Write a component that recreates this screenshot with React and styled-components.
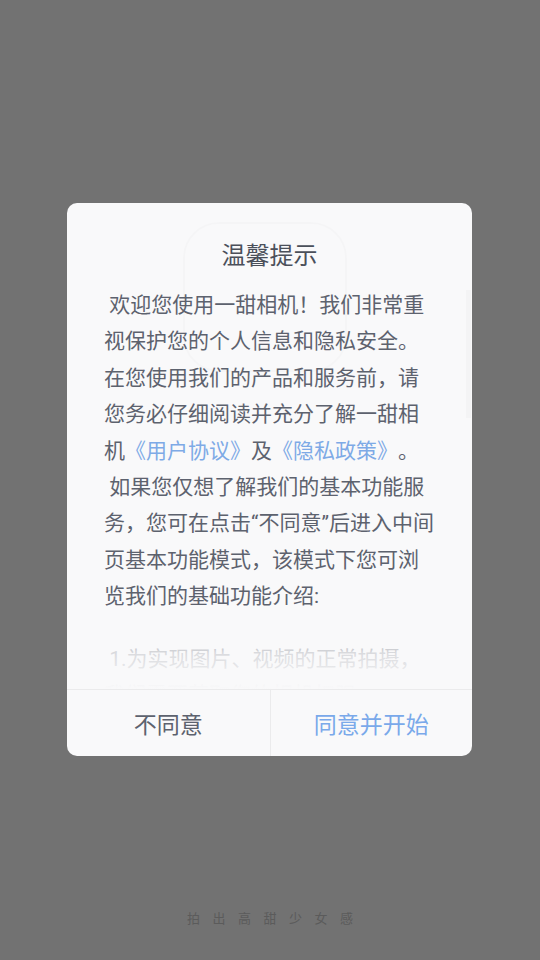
import styled, { createGlobalStyle } from "styled-components"

const GlobalStyle = createGlobalStyle`
    html, body {
        margin: 0;
        padding: 0;
        background: #727272;
    }
    * {
        box-sizing: border-box;
    }
`

const Page = styled.div`
    width: 100vw;
    height: 100vh;
    display: flex;
    flex-direction: column;
    background: #727272;
    font-family: Roboto, "Noto Sans CJK SC", sans-serif;
    text-spacing-trim: space-all;
`

const Stage = styled.div`
    flex: 1;
    padding: 85px 1px 0 0;
    display: flex;
    align-items: center;
    justify-content: center;
`

const Dialog = styled.div`
    position: relative;
    width: 405px;
    height: 553px;
    background: #f9f9fa;
    border-radius: 10px;
    overflow: hidden;
    display: flex;
    flex-direction: column;
`

const Watermark = styled.div`
    position: absolute;
    left: 116px;
    top: 19px;
    width: 164px;
    height: 150px;
    border-radius: 36px;
    border: 2px solid rgba(0, 0, 0, 0.014);
`

const ScrollThumb = styled.div`
    position: absolute;
    right: 1px;
    top: 87px;
    width: 5px;
    height: 128px;
    background: rgba(0, 0, 0, 0.02);
`

const Title = styled.h2`
    position: relative;
    margin: 38px 0 16px;
    font-size: 24px;
    line-height: 30px;
    font-weight: 400;
    color: #4b505a;
    text-align: center;
`

const Body = styled.div`
    position: relative;
    flex: 1;
    overflow: hidden;
    padding: 0 37px;
`

const Para = styled.p`
    margin: ${(p) => (p.$gap ? "26px 0 0" : "0")};
    font-size: 21px;
    line-height: 36.4px;
    color: #5d626e;
    white-space: pre-wrap;
`

const Link = styled.span`
    color: #7eaae6;
`

const Fade = styled.div`
    position: absolute;
    left: 0;
    right: 0;
    bottom: 0;
    height: 72px;
    background: linear-gradient(
        rgba(249, 249, 250, 0),
        rgba(249, 249, 250, 0.8) 50%,
        #f9f9fa 100%
    );
`

const Actions = styled.div`
    display: grid;
    grid-template-columns: 1fr 1fr;
    height: 67px;
    border-top: 1px solid #ebebec;
`

const ActionButton = styled.button`
    border: none;
    background: transparent;
    font-family: inherit;
    font-size: 23px;
    color: ${(p) => (p.$primary ? "#7aa9ea" : "#5d626e")};
    border-left: ${(p) => (p.$primary ? "1px solid #ebebec" : "none")};
    cursor: pointer;
    padding: 0;
`

const Footer = styled.div`
    height: 86px;
    display: flex;
    align-items: center;
    justify-content: center;
    padding-left: 12.5px;
    font-size: 13px;
    letter-spacing: 12.5px;
    color: #5b5b5b;
`

const App = () => {
  return (
    <Page>
        <GlobalStyle />
        <Stage>
            <Dialog>
                <Watermark />
                <ScrollThumb />
                <Title>温馨提示</Title>
                <Body>
                    <Para>
                        {" 欢迎您使用一甜相机！我们非常重视保护您的个人信息和隐私安全。在您使用我们的产品和服务前，请您务必仔细阅读并充分了解一甜相机"}
                        <Link>《用户协议》</Link>及<Link>《隐私政策》</Link>。
                    </Para>
                    <Para>
                        {" 如果您仅想了解我们的基本功能服务，您可在点击“不同意”后进入中间页基本功能模式，该模式下您可浏览我们的基础功能介绍:"}
                    </Para>
                    <Para $gap>
                        {" 1.为实现图片、视频的正常拍摄，我们需要获取您的相机权限。"}
                    </Para>
                    <Fade />
                </Body>
                <Actions>
                    <ActionButton>不同意</ActionButton>
                    <ActionButton $primary>同意并开始</ActionButton>
                </Actions>
            </Dialog>
        </Stage>
        <Footer>拍出高甜少女感</Footer>
    </Page>
  )
}

export default App
